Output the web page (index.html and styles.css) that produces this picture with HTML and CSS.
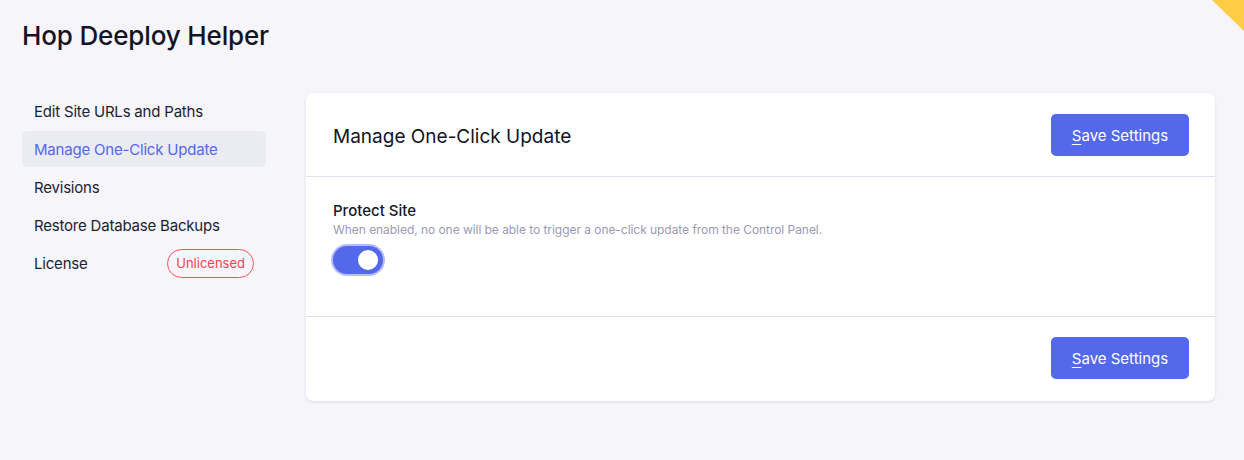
FILE: index.html
```html
<!DOCTYPE html>
<html lang="en">
<head>
<meta charset="utf-8">
<title>Hop Deeploy Helper</title>
<link rel="stylesheet" href="styles.css">
</head>
<body>
<div class="corner"></div>
<div class="page">
  <h1 class="page-title">Hop Deeploy Helper</h1>
  <div class="layout">
    <nav class="sidebar">
      <a class="nav-item" href="#">Edit Site URLs and Paths</a>
      <a class="nav-item active" href="#">Manage One-Click Update</a>
      <a class="nav-item" href="#">Revisions</a>
      <a class="nav-item" href="#">Restore Database Backups</a>
      <a class="nav-item" href="#"><span>License</span><span class="badge">Unlicensed</span></a>
    </nav>
    <div class="card">
      <div class="card-header">
        <h2 class="card-title">Manage One-Click Update</h2>
        <button class="btn"><u>S</u>ave Settings</button>
      </div>
      <div class="card-body">
        <div class="field-label">Protect Site</div>
        <div class="field-desc">When enabled, no one will be able to trigger a one-click update from the Control Panel.</div>
        <div class="toggle"><span class="knob"></span></div>
      </div>
      <div class="card-footer">
        <button class="btn"><u>S</u>ave Settings</button>
      </div>
    </div>
  </div>
</div>
</body>
</html>
```
FILE: styles.css
```css
* { box-sizing: border-box; }
html, body { margin: 0; padding: 0; }
body {
  background: #f5f5fa;
  font-family: Inter, "Noto Sans", sans-serif;
  color: #17172b;
  width: 1244px;
  height: 460px;
  overflow: hidden;
  position: relative;
}
.corner {
  position: absolute;
  top: 0;
  right: 0;
  width: 32px;
  height: 31px;
  background: #fecd45;
  clip-path: polygon(0 0, 100% 0, 100% 100%);
}
.page {
  padding: 19px 29px 0 22px;
}
.page-title {
  margin: 0;
  font-size: 26px;
  line-height: 34px;
  font-weight: 500;
  color: #131325;
  letter-spacing: -0.15px;
}
.layout {
  display: grid;
  grid-template-columns: 244px 1fr;
  column-gap: 40px;
  margin-top: 40px;
  align-items: start;
}
.sidebar {
  display: flex;
  flex-direction: column;
  gap: 2px;
}
.nav-item {
  display: flex;
  align-items: center;
  justify-content: space-between;
  height: 36px;
  padding: 0 12px;
  border-radius: 5px;
  font-size: 15px;
  letter-spacing: -0.2px;
  color: #1d1d30;
  text-decoration: none;
}
.nav-item.active {
  background: #ebebf3;
  color: #5468ea;
}
.badge {
  display: inline-flex;
  align-items: center;
  height: 29px;
  padding: 0 8px;
  border: 1px solid #f5535f;
  border-radius: 15px;
  color: #f24452;
  font-size: 13px;
  letter-spacing: 0;
}
.card {
  background: #fff;
  border-radius: 7px;
  box-shadow: 0 1px 3px rgba(30, 30, 70, 0.12);
}
.card-header {
  display: flex;
  align-items: center;
  justify-content: space-between;
  padding: 21px 26px 20px 27px;
  border-bottom: 1px solid #e1e1ee;
}
.card-title {
  margin: 0;
  font-size: 19px;
  font-weight: 400;
  color: #131325;
  position: relative;
  top: 1px;
}
.btn {
  width: 138px;
  height: 42px;
  border: 0;
  border-radius: 5px;
  background: #5468ec;
  color: #fff;
  font-family: Inter, "Noto Sans", sans-serif;
  font-size: 15px;
  cursor: pointer;
}
.btn u { text-underline-offset: 3px; }
.card-body {
  padding: 25px 27px 42px 26px;
  border-bottom: 1px solid #e1e1ee;
}
.field-label {
  font-size: 15px;
  font-weight: 500;
  line-height: 18px;
  color: #17172b;
  margin-left: 1px;
}
.field-desc {
  font-size: 12px;
  line-height: 16px;
  color: #9a9ab3;
  margin-top: 2px;
  margin-left: 1px;
  letter-spacing: -0.05px;
}
.toggle {
  margin-top: 8px;
  margin-left: 1px;
  width: 50px;
  height: 28px;
  border-radius: 14px;
  background: #5468ec;
  box-shadow: 0 0 0 2px #b5bdf6;
  display: flex;
  align-items: center;
  justify-content: flex-end;
  padding-right: 5px;
}
.knob {
  width: 20px;
  height: 20px;
  border-radius: 50%;
  background: #fff;
}
.card-footer {
  display: flex;
  justify-content: flex-end;
  padding: 20px 26px 22px 27px;
}
```
